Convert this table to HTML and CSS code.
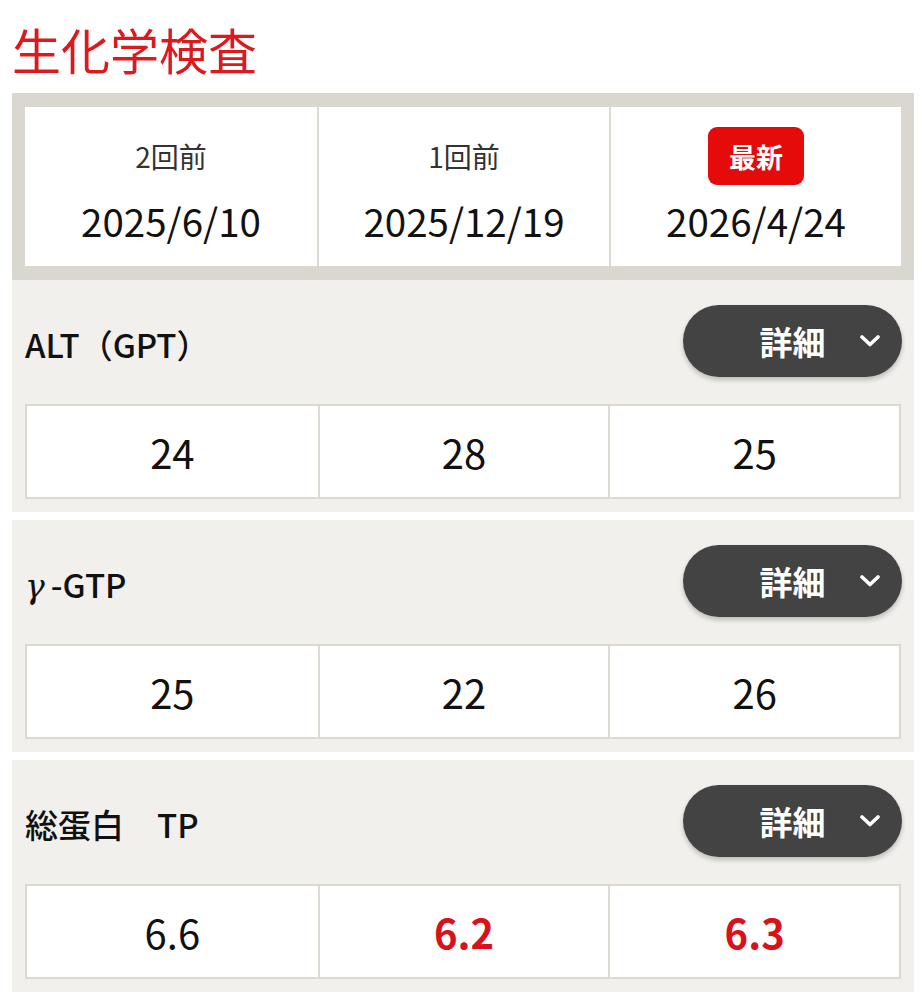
FILE: index.html
```html
<!DOCTYPE html>
<html lang="ja">
<head>
<meta charset="utf-8">
<link rel="stylesheet" href="styles.css">
</head>
<body>
<h1 class="page-title">生化学検査</h1>
<div class="dates">
  <div class="date-col">
    <div class="date-label">2回前</div>
    <div class="date-value">2025/6/10</div>
  </div>
  <div class="date-col">
    <div class="date-label">1回前</div>
    <div class="date-value">2025/12/19</div>
  </div>
  <div class="date-col">
    <div class="date-label"><span class="badge">最新</span></div>
    <div class="date-value">2026/4/24</div>
  </div>
</div>

<section class="item">
  <div class="item-head">
    <div class="item-name">ALT（GPT）</div>
    <button class="detail-btn">詳細<svg class="chev" width="20" height="12" viewBox="0 0 20 12"><polyline points="2,2 10,9.5 18,2" fill="none" stroke="#fff" stroke-width="3.6" stroke-linecap="round" stroke-linejoin="round"/></svg></button>
  </div>
  <div class="values">
    <div class="val">24</div>
    <div class="val">28</div>
    <div class="val">25</div>
  </div>
</section>

<section class="item">
  <div class="item-head">
    <div class="item-name"><span class="gamma">γ</span>-GTP</div>
    <button class="detail-btn">詳細<svg class="chev" width="20" height="12" viewBox="0 0 20 12"><polyline points="2,2 10,9.5 18,2" fill="none" stroke="#fff" stroke-width="3.6" stroke-linecap="round" stroke-linejoin="round"/></svg></button>
  </div>
  <div class="values">
    <div class="val">25</div>
    <div class="val">22</div>
    <div class="val">26</div>
  </div>
</section>

<section class="item">
  <div class="item-head">
    <div class="item-name">総蛋白　TP</div>
    <button class="detail-btn">詳細<svg class="chev" width="20" height="12" viewBox="0 0 20 12"><polyline points="2,2 10,9.5 18,2" fill="none" stroke="#fff" stroke-width="3.6" stroke-linecap="round" stroke-linejoin="round"/></svg></button>
  </div>
  <div class="values">
    <div class="val">6.6</div>
    <div class="val val-alert">6.2</div>
    <div class="val val-alert">6.3</div>
  </div>
</section>
</body>
</html>
```
FILE: styles.css
```css
* { box-sizing: border-box; }
body {
  margin: 0;
  background: #fff;
  font-family: "Noto Sans CJK JP", "Noto Sans", sans-serif;
  color: #1a1a1a;
}
.page-title {
  margin: 0;
  padding: 24px 0 0 12px;
  height: 93px;
  font-size: 49px;
  line-height: 50px;
  font-weight: 400;
  color: #dc1a1e;
}
.dates {
  margin: 0 8px 0 12px;
  border-style: solid;
  border-color: #dad7d0;
  border-width: 14px 13px;
  background: #fff;
  display: grid;
  grid-template-columns: 1fr 1fr 1fr;
}
.date-col {
  display: flex;
  flex-direction: column;
  align-items: center;
  padding: 20px 0 21px;
}
.date-col + .date-col { border-left: 2px solid #dcd9d2; }
.date-label {
  height: 58px;
  display: flex;
  align-items: center;
  font-size: 28px;
  color: #333;
}
.badge {
  display: inline-flex;
  align-items: center;
  justify-content: center;
  width: 96px;
  height: 58px;
  border-radius: 9px;
  background: #e50b0b;
  color: #fff;
  font-weight: 700;
  font-size: 27px;
}
.date-value {
  margin-top: 10px;
  height: 50px;
  line-height: 50px;
  font-size: 38.5px;
  color: #111;
}
.item {
  margin: 0 8px 8px 12px;
  background: #f1f0ed;
  padding: 25px 13px 13px;
}
.item-head {
  display: flex;
  align-items: center;
  justify-content: space-between;
  height: 72px;
}
.item-name {
  margin-top: 6px;
  font-size: 33px;
  font-weight: 500;
  color: #111;
}
.gamma { font-style: italic; font-family: "DejaVu Serif", serif; font-weight: 400; margin-right: 6px; }
.detail-btn {
  position: relative;
  width: 219px;
  height: 72px;
  border: none;
  border-radius: 36px;
  background: #434343;
  box-shadow: 0 3px 5px rgba(0,0,0,0.22);
  color: #fff;
  font-family: inherit;
  font-size: 33px;
  font-weight: 700;
  padding: 0;
  margin-right: -1px;
}
.chev {
  position: absolute;
  right: 22px;
  top: 30px;
}
.values {
  margin-top: 27px;
  height: 95px;
  display: grid;
  grid-template-columns: 1fr 1fr 1fr;
  border: 2px solid #dcd9d2;
  background: #fff;
}
.val {
  display: flex;
  align-items: center;
  justify-content: center;
  font-size: 40px;
  color: #111;
}
.val + .val { border-left: 2px solid #dcd9d2; }
.val-alert { color: #d8111b; font-weight: 700; }
```
